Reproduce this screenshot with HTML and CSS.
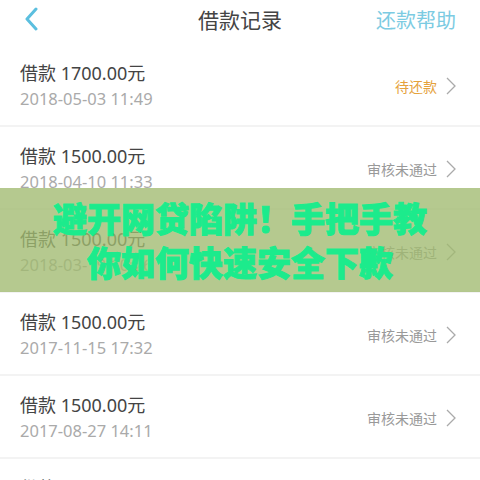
FILE: index.html
```html
<!DOCTYPE html>
<html lang="zh-CN">
<head>
  <meta charset="utf-8">
  <meta name="viewport" content="width=device-width, initial-scale=1.0">
  <title>借款记录</title>
  <link rel="stylesheet" href="styles.css">
</head>
<body>
  <div class="page">
    <header class="nav">
      <a class="nav-back" href="#">
        <svg viewBox="0 0 14 24" width="14" height="24">
          <path d="M12 2 L3 12 L12 22" fill="none" stroke="#5bbfdf" stroke-width="3" stroke-linecap="round" stroke-linejoin="round"/>
        </svg>
      </a>
      <h1 class="nav-title">借款记录</h1>
      <a class="nav-help" href="#">还款帮助</a>
    </header>

    <ul class="records">
      <li class="record">
        <div class="record-info">
          <p class="record-amount">借款 1700.00元</p>
          <p class="record-date">2018-05-03 11:49</p>
        </div>
        <span class="record-status pending">待还款</span>
        <svg class="arrow" viewBox="0 0 10 18" width="10" height="18"><path d="M1 1 L9 9 L1 17" fill="none" stroke="#aaa" stroke-width="1.3"/></svg>
      </li>
      <li class="record">
        <div class="record-info">
          <p class="record-amount">借款 1500.00元</p>
          <p class="record-date">2018-04-10 11:33</p>
        </div>
        <span class="record-status">审核未通过</span>
        <svg class="arrow" viewBox="0 0 10 18" width="10" height="18"><path d="M1 1 L9 9 L1 17" fill="none" stroke="#aaa" stroke-width="1.3"/></svg>
      </li>
      <li class="record">
        <div class="record-info">
          <p class="record-amount">借款 1500.00元</p>
          <p class="record-date">2018-03-19 10:26</p>
        </div>
        <span class="record-status">审核未通过</span>
        <svg class="arrow" viewBox="0 0 10 18" width="10" height="18"><path d="M1 1 L9 9 L1 17" fill="none" stroke="#aaa" stroke-width="1.3"/></svg>
      </li>
      <li class="record">
        <div class="record-info">
          <p class="record-amount">借款 1500.00元</p>
          <p class="record-date">2017-11-15 17:32</p>
        </div>
        <span class="record-status">审核未通过</span>
        <svg class="arrow" viewBox="0 0 10 18" width="10" height="18"><path d="M1 1 L9 9 L1 17" fill="none" stroke="#aaa" stroke-width="1.3"/></svg>
      </li>
      <li class="record">
        <div class="record-info">
          <p class="record-amount">借款 1500.00元</p>
          <p class="record-date">2017-08-27 14:11</p>
        </div>
        <span class="record-status">审核未通过</span>
        <svg class="arrow" viewBox="0 0 10 18" width="10" height="18"><path d="M1 1 L9 9 L1 17" fill="none" stroke="#aaa" stroke-width="1.3"/></svg>
      </li>
      <li class="record">
        <div class="record-info">
          <p class="record-amount">借款 1500.00元</p>
          <p class="record-date">2017-06-02 09:18</p>
        </div>
        <span class="record-status">审核未通过</span>
        <svg class="arrow" viewBox="0 0 10 18" width="10" height="18"><path d="M1 1 L9 9 L1 17" fill="none" stroke="#aaa" stroke-width="1.3"/></svg>
      </li>
    </ul>

    <div class="banner">
      <p>避开网贷陷阱！手把手教</p>
      <p>你如何快速安全下款</p>
    </div>
  </div>
</body>
</html>
```

FILE: styles.css
```css
* {
  box-sizing: border-box;
  margin: 0;
  padding: 0;
}
body {
  font-family: "Noto Sans", "Noto Sans CJK SC", sans-serif;
  background: #fff;
  color: #444;
  overflow: hidden;
}
.page {
  position: relative;
  width: 480px;
  height: 480px;
  overflow: hidden;
}
.nav {
  height: 44px;
  display: flex;
  align-items: center;
  justify-content: space-between;
  padding: 0 24px 6px 24px;
}
.nav-back {
  display: flex;
  width: 80px;
}
.nav-title {
  font-size: 21px;
  font-weight: 400;
  color: #444;
}
.nav-help {
  width: 80px;
  text-align: right;
  font-size: 20px;
  color: #7ccbe2;
  text-decoration: none;
  white-space: nowrap;
}
.records {
  list-style: none;
}
.record {
  height: 83px;
  display: flex;
  align-items: center;
  padding: 2px 24px 0 20px;
  border-bottom: 2px solid #f3f3f3;
}
.record-info {
  flex: 1;
}
.record-amount {
  font-size: 18px;
  color: #444;
  line-height: 24px;
}
.record-date {
  margin-top: 3px;
  font-size: 16.5px;
  color: #aaa;
  line-height: 22px;
}
.record-status {
  font-size: 14px;
  color: #999;
  margin-right: 9px;
}
.record-status.pending {
  color: #e5a23c;
}
.arrow {
  display: block;
}
.banner {
  position: absolute;
  left: 0;
  right: 0;
  top: 188px;
  height: 104px;
  padding-top: 8px;
  background: rgba(160, 186, 112, 0.78);
  text-align: center;
  font-family: "Noto Sans CJK SC", sans-serif;
  font-size: 34px;
  font-weight: 900;
  line-height: 44px;
  color: #1ceb8c;
  -webkit-text-stroke: 1px #1ceb8c;
}
```
